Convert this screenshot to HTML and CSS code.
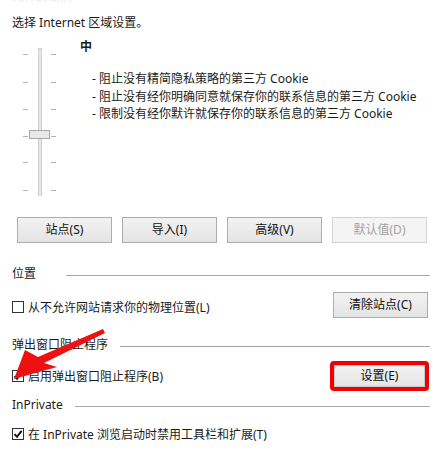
FILE: index.html
```html
<!DOCTYPE html>
<html lang="zh-CN">
<head>
<meta charset="utf-8">
<link rel="stylesheet" href="styles.css">
</head>
<body>
<div class="page">
  <div class="ghost"><span>允许的级别</span></div>
  <div class="title">选择 Internet 区域设置。</div>

  <div class="zone">
    <div class="slider">
      <svg width="68" height="160" viewBox="0 0 68 160">
        <g stroke="#b4b4b4" stroke-width="1">
          <line x1="11" y1="15.5" x2="16" y2="15.5"/><line x1="39" y1="15.5" x2="44" y2="15.5"/>
          <line x1="11" y1="43.5" x2="16" y2="43.5"/><line x1="39" y1="43.5" x2="44" y2="43.5"/>
          <line x1="11" y1="70.5" x2="16" y2="70.5"/><line x1="39" y1="70.5" x2="44" y2="70.5"/>
          <line x1="11" y1="97.5" x2="16" y2="97.5"/><line x1="39" y1="97.5" x2="44" y2="97.5"/>
          <line x1="11" y1="123.5" x2="16" y2="123.5"/><line x1="39" y1="123.5" x2="44" y2="123.5"/>
          <line x1="11" y1="151.5" x2="16" y2="151.5"/><line x1="39" y1="151.5" x2="44" y2="151.5"/>
        </g>
        <rect x="26.5" y="9.5" width="3" height="147" fill="#e6e6e6" stroke="#d2d2d2"/>
        <rect x="17.5" y="91.5" width="20" height="8" fill="#e8e8e8" stroke="#a9a9a9"/>
      </svg>
    </div>
    <div class="desc">
      <div class="level">中</div>
      <ul class="bullets">
        <li>- 阻止没有精简隐私策略的第三方 Cookie</li>
        <li>- 阻止没有经你明确同意就保存你的联系信息的第三方 Cookie</li>
        <li>- 限制没有经你默许就保存你的联系信息的第三方 Cookie</li>
      </ul>
    </div>
  </div>

  <div class="btnrow">
    <div class="btn">站点(S)</div>
    <div class="btn">导入(I)</div>
    <div class="btn">高级(V)</div>
    <div class="btn disabled">默认值(D)</div>
  </div>

  <div class="group g-loc">
    <span class="gtitle">位置</span><span class="gline wide"></span>
  </div>
  <div class="row r-loc">
    <label class="check"><span class="box"></span><span>从不允许网站请求你的物理位置(L)</span></label>
    <div class="btn side">清除站点(C)</div>
  </div>

  <div class="group g-pop">
    <span class="gtitle">弹出窗口阻止程序</span><span class="gline"></span>
  </div>
  <div class="row r-pop">
    <label class="check"><span class="box"><svg width="10" height="10" viewBox="0 0 10 10"><path d="M1.5 5.2 L4 7.8 L8.6 1.8" fill="none" stroke="#111" stroke-width="1.9"/></svg></span><span>启用弹出窗口阻止程序(B)</span></label>
    <div class="highlight"><div class="btn inner">设置(E)</div></div>
  </div>

  <div class="group g-priv">
    <span class="gtitle">InPrivate</span><span class="gline"></span>
  </div>
  <div class="row r-priv">
    <label class="check"><span class="box"><svg width="10" height="10" viewBox="0 0 10 10"><path d="M1.5 5.2 L4 7.8 L8.6 1.8" fill="none" stroke="#111" stroke-width="1.9"/></svg></span><span>在 InPrivate 浏览启动时禁用工具栏和扩展(T)</span></label>
  </div>

  <svg class="arrow" width="446" height="467" viewBox="0 0 446 467">
    <polygon points="14,379 25,350 38,357 103,329 105,333 44,363 57,367" fill="#ee1111"/>
  </svg>
</div>
</body>
</html>
```

FILE: styles.css
```css
html, body {
  margin: 0;
  padding: 0;
  background: #ffffff;
}
body {
  font-family: "Noto Sans", "Noto Sans CJK SC", sans-serif;
  font-size: 12px;
  color: #1b1b1b;
}
.page {
  position: relative;
  width: 446px;
  height: 467px;
  box-sizing: border-box;
  padding: 0 16px 0 12px;
  overflow: hidden;
}
.ghost {
  height: 15px;
  overflow: hidden;
  color: #ececec;
  line-height: 12px;
}
.ghost span {
  display: block;
  margin-top: -9px;
}
.title {
  height: 16px;
  line-height: 16px;
}
.zone {
  display: flex;
  margin-top: 8px;
  height: 160px;
}
.slider {
  width: 68px;
  flex: none;
}
.slider svg {
  display: block;
}
.level {
  font-weight: bold;
  line-height: 16px;
  height: 16px;
}
.bullets {
  list-style: none;
  margin: 15px 0 0 0;
  padding: 0 0 0 12px;
}
.bullets li {
  line-height: 17.5px;
  height: 17.5px;
  white-space: nowrap;
}
.btnrow {
  display: flex;
  gap: 10px;
  margin: 18px 0 0 5px;
}
.btn {
  width: 95px;
  height: 26px;
  box-sizing: border-box;
  border: 1px solid #adadad;
  background: linear-gradient(#f2f2f2, #e4e4e4);
  display: flex;
  align-items: center;
  justify-content: center;
  color: #111;
  line-height: 1;
}
.btn.disabled {
  border-color: #d3d3d3;
  background: #f4f4f4;
  color: #a3a3a3;
}
.group {
  display: flex;
  align-items: center;
  height: 16px;
  line-height: 16px;
}
.gtitle {
  white-space: nowrap;
}
.gline {
  flex: 1;
  height: 1px;
  background: #a6a6a6;
  margin-left: 12px;
  margin-top: 3px;
}
.gline.wide {
  margin-left: 30px;
}
.g-loc { margin-top: 23px; }
.g-pop { margin-top: 19px; }
.g-priv { margin-top: 6px; }
.row {
  display: flex;
  align-items: center;
  justify-content: space-between;
}
.r-loc {
  margin-top: 10px;
  height: 26px;
}
.r-loc .check { margin-top: 4px; }
.r-pop {
  margin-top: 8px;
  height: 30px;
}
.r-priv {
  margin-top: 13px;
  height: 16px;
}
.check {
  display: flex;
  align-items: center;
  gap: 4px;
  white-space: nowrap;
}
.box {
  width: 12px;
  height: 12px;
  box-sizing: border-box;
  border: 1px solid #333;
  background: #fff;
  display: flex;
  align-items: center;
  justify-content: center;
}
.box svg { display: block; }
.btn.side {
  margin-right: 2px;
}
.highlight {
  border: 4px solid #f00000;
  border-radius: 4px;
  width: 99px;
  height: 30px;
  box-sizing: border-box;
  margin-right: 1px;
}
.btn.inner {
  width: 91px;
  height: 22px;
  border-color: #c9c9c9;
}
.arrow {
  position: absolute;
  left: 0;
  top: 0;
  pointer-events: none;
}
```
